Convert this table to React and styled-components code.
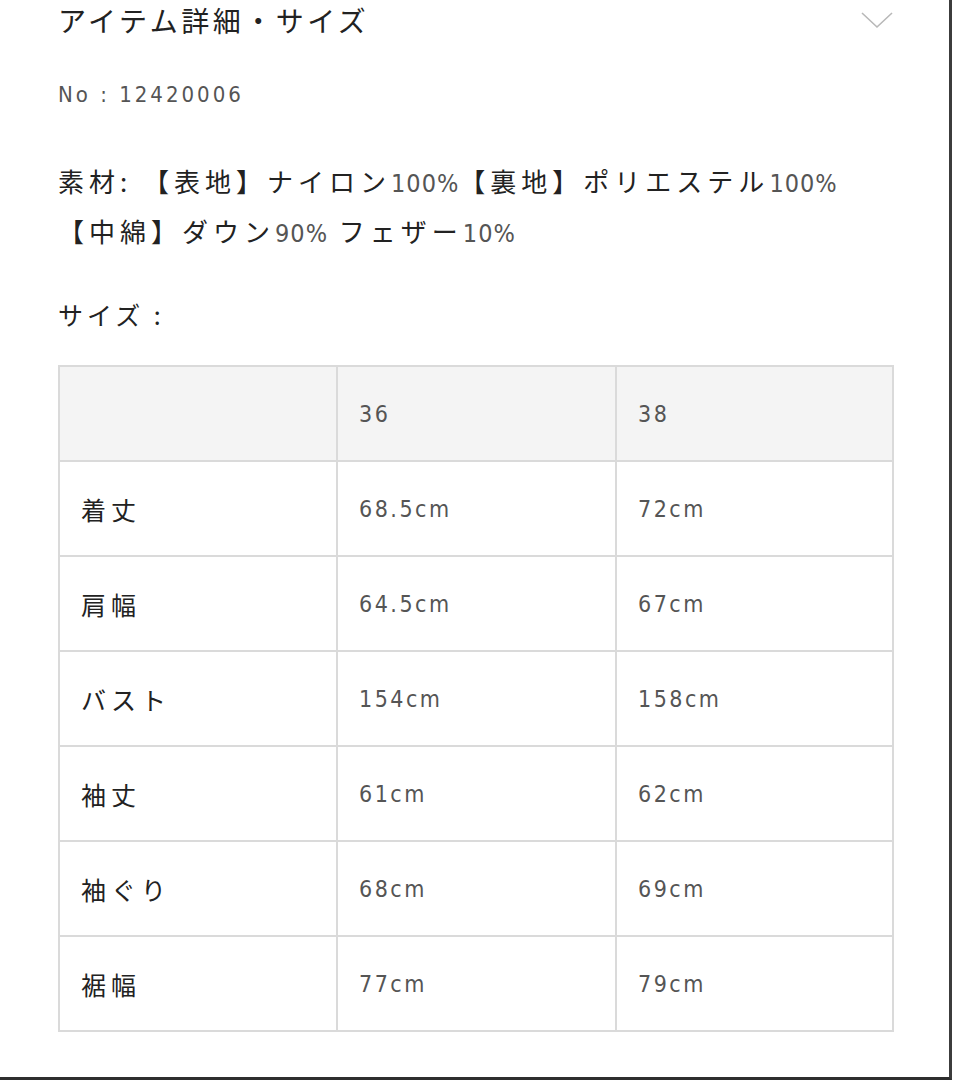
import React from 'react';
import styled, { createGlobalStyle } from 'styled-components';

const GlobalStyle = createGlobalStyle`
html,body{
margin:0;
padding:0;
background:#fff;
}
body{
font-family:"Noto Sans CJK JP", sans-serif;
color:#222;
}
`

const Frame = styled.div`
box-sizing:border-box;
width:952px;
height:1080px;
padding:0 56px 0 58px;
border-right:3px solid #3c3c3c;
border-bottom:3px solid #2e2e2e;
overflow:hidden;
`

const Header = styled.div`
display:flex;
align-items:center;
justify-content:space-between;
height:40px;
`

const Title = styled.h2`
margin:0;
font-size:28px;
font-weight:400;
letter-spacing:3.5px;
line-height:40px;
color:#222;
`

const Chevron = styled.svg`
width:32px;
height:18px;
margin-top:0;
`

const ItemNo = styled.div`
margin-top:40px;
font-family:"DejaVu Sans Condensed", "Noto Sans CJK JP", sans-serif;
font-size:22px;
line-height:30px;
letter-spacing:3px;
color:#555;
`

const Material = styled.p`
margin:46px 0 0;
font-size:26px;
line-height:50px;
letter-spacing:5px;
color:#222;
`

const Num = styled.span`
font-family:"DejaVu Sans Condensed", sans-serif;
font-size:25px;
line-height:1;
letter-spacing:1px;
color:#555;
`

const SizeLabel = styled.div`
margin-top:33px;
font-size:25px;
line-height:50px;
letter-spacing:4px;
`

const Table = styled.table`
margin-top:26px;
width:834px;
border-collapse:collapse;
table-layout:fixed;
`

const Row = styled.tr`
height:95px;
background:${p => (p.$head ? '#f4f4f4' : '#fff')};
`

const Cell = styled.td`
border:2px solid #dadada;
padding:0 0 0 21px;
vertical-align:middle;
font-family:${p => (p.$label ? '"Noto Sans CJK JP", sans-serif' : '"DejaVu Sans Condensed", "Noto Sans CJK JP", sans-serif')};
font-size:${p => (p.$label ? '25px' : '23px')};
letter-spacing:${p => (p.$label ? '5px' : '2.5px')};
color:${p => (p.$label ? '#222' : '#555')};
`

const rows = [
  ['着丈', '68.5cm', '72cm'],
  ['肩幅', '64.5cm', '67cm'],
  ['バスト', '154cm', '158cm'],
  ['袖丈', '61cm', '62cm'],
  ['袖ぐり', '68cm', '69cm'],
  ['裾幅', '77cm', '79cm'],
]

export default function App() {
  return (
    <>
      <GlobalStyle />
      <Frame>
        <Header>
          <Title>アイテム詳細・サイズ</Title>
          <Chevron viewBox="0 0 32 18">
            <path d="M1 2 L16 16 L31 2" fill="none" stroke="#b8b8b8" strokeWidth="1.6" />
          </Chevron>
        </Header>
        <ItemNo>No : 12420006</ItemNo>
        <Material>
          素材: 【表地】ナイロン<Num>100%</Num>【裏地】ポリエステル<Num>100%</Num>
          <br />
          【中綿】ダウン<Num>90%</Num> フェザー<Num>10%</Num>
        </Material>
        <SizeLabel>サイズ :</SizeLabel>
        <Table>
          <colgroup>
            <col style={{ width: 278 }} />
            <col style={{ width: 279 }} />
            <col style={{ width: 277 }} />
          </colgroup>
          <tbody>
            <Row $head>
              <Cell $label></Cell>
              <Cell>36</Cell>
              <Cell>38</Cell>
            </Row>
            {rows.map(r => (
              <Row key={r[0]}>
                <Cell $label>{r[0]}</Cell>
                <Cell>{r[1]}</Cell>
                <Cell>{r[2]}</Cell>
              </Row>
            ))}
          </tbody>
        </Table>
      </Frame>
    </>
  )
}
